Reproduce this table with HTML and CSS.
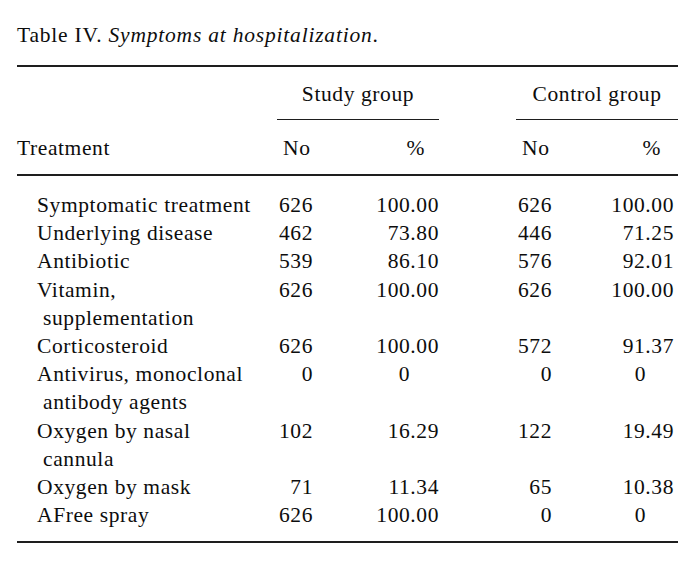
FILE: index.html
```html
<!DOCTYPE html>
<html lang="en">
<head>
<meta charset="utf-8">
<title>Table IV. Symptoms at hospitalization</title>
<link rel="stylesheet" href="styles.css">
</head>
<body>
<div class="page">
  <p class="caption">Table IV. <em>Symptoms at hospitalization</em>.</p>
  <table class="data">
    <colgroup>
      <col class="c-label">
      <col class="c-no">
      <col class="c-pct">
      <col class="c-gap">
      <col class="c-no">
      <col class="c-pct">
    </colgroup>
    <thead>
      <tr class="grp">
        <th></th>
        <th colspan="2" class="grp-cell">Study group</th>
        <th></th>
        <th colspan="2" class="grp-cell">Control group</th>
      </tr>
      <tr class="sub">
        <th class="lbl">Treatment</th>
        <th class="h-no">No</th>
        <th class="h-p1">%</th>
        <th></th>
        <th class="h-no">No</th>
        <th class="h-p2">%</th>
      </tr>
    </thead>
    <tbody>
      <tr><td class="lbl">Symptomatic treatment</td><td class="n1">626</td><td class="p1">100.00</td><td></td><td class="n2">626</td><td class="p2">100.00</td></tr>
      <tr><td class="lbl">Underlying disease</td><td class="n1">462</td><td class="p1">73.80</td><td></td><td class="n2">446</td><td class="p2">71.25</td></tr>
      <tr><td class="lbl">Antibiotic</td><td class="n1">539</td><td class="p1">86.10</td><td></td><td class="n2">576</td><td class="p2">92.01</td></tr>
      <tr><td class="lbl">Vitamin,<br>supplementation</td><td class="n1">626</td><td class="p1">100.00</td><td></td><td class="n2">626</td><td class="p2">100.00</td></tr>
      <tr><td class="lbl">Corticosteroid</td><td class="n1">626</td><td class="p1">100.00</td><td></td><td class="n2">572</td><td class="p2">91.37</td></tr>
      <tr><td class="lbl">Antivirus, monoclonal<br>antibody agents</td><td class="n1">0</td><td class="p1 z">0</td><td></td><td class="n2">0</td><td class="p2 z">0</td></tr>
      <tr><td class="lbl">Oxygen by nasal<br>cannula</td><td class="n1">102</td><td class="p1">16.29</td><td></td><td class="n2">122</td><td class="p2">19.49</td></tr>
      <tr><td class="lbl">Oxygen by mask</td><td class="n1">71</td><td class="p1">11.34</td><td></td><td class="n2">65</td><td class="p2">10.38</td></tr>
      <tr><td class="lbl">AFree spray</td><td class="n1">626</td><td class="p1">100.00</td><td></td><td class="n2">0</td><td class="p2 z">0</td></tr>
    </tbody>
  </table>
</div>
</body>
</html>
```

FILE: styles.css
```css
html, body {
  margin: 0;
  padding: 0;
  background: #ffffff;
}

body {
  font-family: "Liberation Serif", "Times New Roman", serif;
  font-size: 21.5px;
  line-height: 28.2px;
  color: #0d0d0d;
  letter-spacing: 0.6px;
}

.page {
  padding: 20.6px 0 0 17px;
}

.caption {
  margin: 0 0 16px 0;
  letter-spacing: 0.8px;
}

.caption em {
  font-style: italic;
}

.data {
  width: 661px;
  table-layout: fixed;
  border-collapse: separate;
  border-spacing: 0;
  border-top: 2px solid #1e1e1e;
  border-bottom: 2px solid #1e1e1e;
}

.c-label { width: 260px; }
.c-no { width: 36px; }
.c-pct { width: 126px; }
.c-gap { width: 77px; }

th, td {
  padding: 0;
  font-weight: normal;
  vertical-align: top;
  white-space: nowrap;
}

.grp th {
  padding: 13px 0 11px 0;
}

.grp .grp-cell {
  text-align: center;
  border-bottom: 1.5px solid #1e1e1e;
}

.sub th {
  padding: 14px 0 12px 0;
  border-bottom: 2px solid #1e1e1e;
  text-align: left;
}

.sub .lbl {
  padding-left: 0;
}

.sub .h-no {
  padding-left: 6px;
}

.sub .h-p1 {
  text-align: right;
  padding-right: 14px;
}

.sub .h-p2 {
  text-align: right;
  padding-right: 17px;
}

td.lbl {
  padding-left: 26px;
  text-indent: -6px;
  text-align: left;
}

td.n1,
td.p1,
td.n2 {
  text-align: right;
  padding-right: 0;
}

td.p2 {
  text-align: right;
  padding-right: 4px;
}

td.p1.z {
  padding-right: 29px;
}

td.p2.z {
  padding-right: 32px;
}

tbody tr:first-child td {
  padding-top: 14.7px;
}

tbody tr:last-child td {
  padding-bottom: 11.3px;
}
```
